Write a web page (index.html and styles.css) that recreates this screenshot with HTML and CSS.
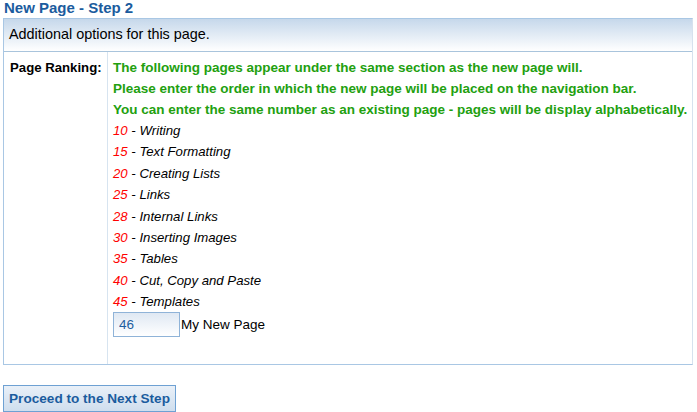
FILE: index.html
```html
<!DOCTYPE html>
<html>
<head>
<meta charset="utf-8">
<link rel="stylesheet" href="styles.css">
</head>
<body>
<h1 class="title">New Page - Step 2</h1>
<div class="box">
  <div class="box-head">Additional options for this page.</div>
  <div class="row">
    <div class="label">Page Ranking:</div>
    <div class="content">
      <p class="note">The following pages appear under the same section as the new page will.</p>
      <p class="note">Please enter the order in which the new page will be placed on the navigation bar.</p>
      <p class="note">You can enter the same number as an existing page - pages will be display alphabetically.</p>
      <ul class="pages">
        <li><span class="num">10</span> - Writing</li>
        <li><span class="num">15</span> - Text Formatting</li>
        <li><span class="num">20</span> - Creating Lists</li>
        <li><span class="num">25</span> - Links</li>
        <li><span class="num">28</span> - Internal Links</li>
        <li><span class="num">30</span> - Inserting Images</li>
        <li><span class="num">35</span> - Tables</li>
        <li><span class="num">40</span> - Cut, Copy and Paste</li>
        <li><span class="num">45</span> - Templates</li>
      </ul>
      <div class="new-row"><input class="order" type="text" value="46"><span class="new-name">My New Page</span></div>
    </div>
  </div>
</div>
<button class="next" type="button">Proceed to the Next Step</button>
</body>
</html>
```

FILE: styles.css
```css
html, body {
  margin: 0;
  padding: 0;
  background: #ffffff;
  font-family: "Liberation Sans", Arial, sans-serif;
  color: #000;
}
body {
  padding: 0 4px 0 3px;
}
.title {
  margin: 0;
  padding: 0 0 0 1px;
  height: 18px;
  font-size: 15px;
  line-height: 16px;
  font-weight: bold;
  color: #1b5c9e;
}
.box {
  border: 1px solid #a9c7e4;
  border-right-color: #d6e2ee;
}
.box-head {
  height: 32px;
  line-height: 31px;
  padding-left: 5px;
  font-size: 14.4px;
  background: linear-gradient(#c6d8eb, #ffffff);
  border-bottom: 1px solid #a9c4dc;
}
.row {
  display: flex;
  height: 312px;
}
.label {
  box-sizing: border-box;
  width: 104px;
  border-right: 1px solid #d7e4f0;
  padding: 8px 0 0 6px;
  font-size: 13.2px;
  font-weight: bold;
  line-height: 16px;
}
.content {
  padding: 8px 0 0 5px;
  font-size: 13px;
}
.note {
  margin: 0 0 5px 0;
  line-height: 16px;
  font-size: 13.5px;
  font-weight: bold;
  color: #22a00f;
}
.pages {
  list-style: none;
  margin: 0;
  padding: 0;
}
.pages li {
  font-style: italic;
  font-size: 13.2px;
  line-height: 16px;
  margin-bottom: 5.4px;
}
.num {
  color: #ff0000;
}
.new-row {
  display: flex;
  align-items: center;
  margin-top: -4px;
}
.order {
  box-sizing: border-box;
  width: 67px;
  height: 25px;
  margin: 0;
  padding: 0 0 0 5px;
  border: 1px solid #8fb3d8;
  background: linear-gradient(#dfe8f3, #ffffff);
  font-family: "Liberation Sans", Arial, sans-serif;
  font-size: 13.5px;
  color: #1f5fa0;
}
.new-name {
  font-size: 13.5px;
  padding-left: 1px;
}
.next {
  display: block;
  margin: 20px 0 0 0;
  box-sizing: border-box;
  width: 173px;
  height: 27px;
  padding: 0;
  border: 1px solid #6ea1d3;
  background: linear-gradient(#e9f0f8, #cfdeee);
  font-family: "Liberation Sans", Arial, sans-serif;
  font-size: 13.6px;
  font-weight: bold;
  color: #1b5c9e;
}
```
